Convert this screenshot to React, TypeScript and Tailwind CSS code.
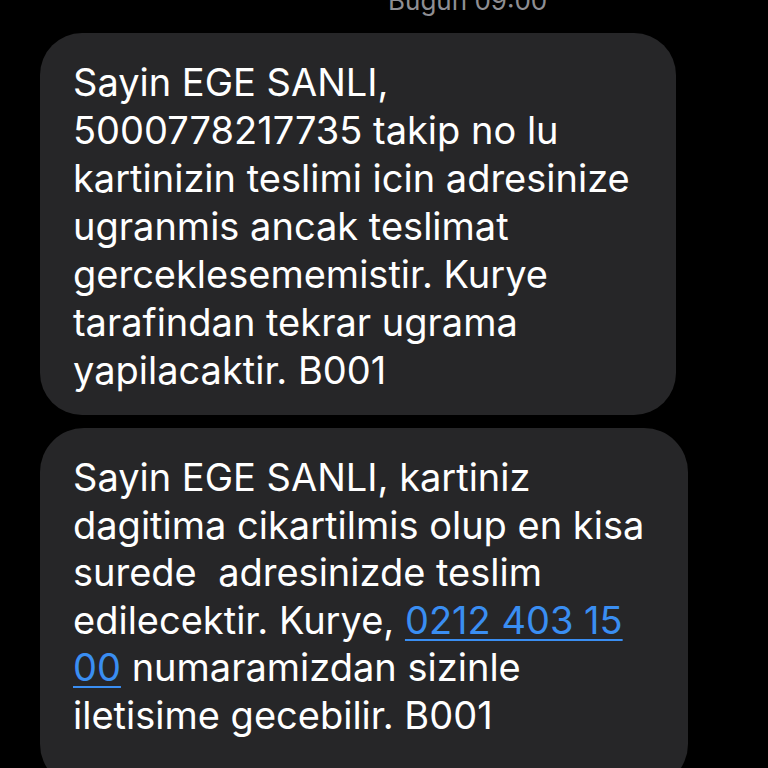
const FIRST = [
  "Sayin EGE SANLI,",
  "5000778217735 takip no lu",
  "kartinizin teslimi icin adresinize",
  "ugranmis ancak teslimat",
  "gerceklesememistir. Kurye",
  "tarafindan tekrar ugrama",
  "yapilacaktir. B001",
];

function Link({ children }: { children: React.ReactNode }) {
  return (
    <span className="text-[#3a8ef2] underline decoration-[2px] underline-offset-[5px]">
      {children}
    </span>
  );
}

export default function App() {
  return (
    <div
      className="w-[768px] h-[768px] overflow-hidden bg-black text-white"
      style={{ fontFamily: "Inter, 'Noto Sans', sans-serif" }}
    >
      <div className="h-[33px] overflow-hidden pl-[388px]">
        <div className="-mt-[12px] text-[26px] leading-[26px] text-[#8e8e93]">
          Bugün 09:00
        </div>
      </div>

      <div className="ml-[40px] flex flex-col gap-[13px]">
        <div className="w-[636px] rounded-[42px] bg-[#262628] pl-[33px] pr-4 pt-[25px] pb-[21px] text-[38px] leading-[48px]">
          {FIRST.map((line) => (
            <div key={line} className="whitespace-nowrap">
              {line}
            </div>
          ))}
        </div>

        <div className="w-[648px] h-[360px] rounded-[44px] bg-[#262628] pl-[33px] pr-4 pt-[26px] text-[38px] leading-[47.6px]">
          <div className="whitespace-nowrap">Sayin EGE SANLI, kartiniz</div>
          <div className="whitespace-nowrap">dagitima cikartilmis olup en kisa</div>
          <div className="whitespace-pre">surede  adresinizde teslim</div>
          <div className="whitespace-nowrap">
            edilecektir. Kurye, <Link>0212 403 15</Link>
          </div>
          <div className="whitespace-nowrap">
            <Link>00</Link> numaramizdan sizinle
          </div>
          <div className="whitespace-nowrap">iletisime gecebilir. B001</div>
        </div>
      </div>
    </div>
  );
}
